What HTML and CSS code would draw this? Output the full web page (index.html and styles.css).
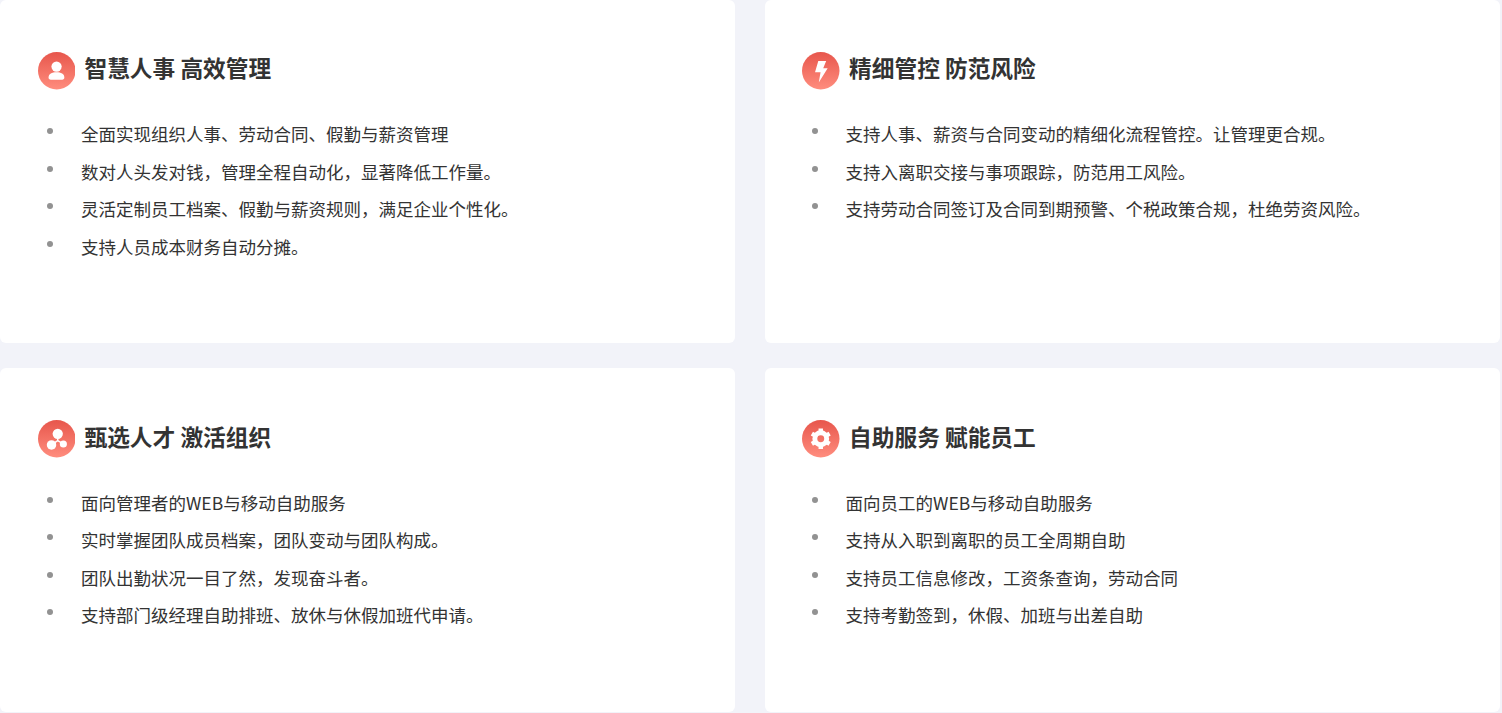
FILE: index.html
```html
<!DOCTYPE html>
<html lang="zh-CN">
<head>
<meta charset="utf-8">
<title>功能特性</title>
<link rel="stylesheet" href="styles.css">
</head>
<body>
<main class="grid">
  <section class="card">
    <h2 class="title">
      <svg class="icon" viewBox="0 0 38 38"><defs><linearGradient id="g1" x1="0" y1="0" x2="0" y2="1"><stop offset="0" stop-color="#e7564c"/><stop offset="1" stop-color="#ff8d7e"/></linearGradient></defs><circle cx="19" cy="19" r="19" fill="url(#g1)"/><circle cx="18.800" cy="14.700" r="5.200" fill="#fff"/><path d="M10.700 25.800c0-3.800 3.400-5.300 8-5.300s8 1.500 8 5.300c0 1.300-.9 2.200-2.200 2.200H12.900c-1.300 0-2.200-.9-2.200-2.200z" fill="#fff"/></svg>
      <span class="title-text">智慧人事 高效管理</span>
    </h2>
    <ul class="list">
      <li>全面实现组织人事、劳动合同、假勤与薪资管理</li>
      <li>数对人头发对钱，管理全程自动化，显著降低工作量。</li>
      <li>灵活定制员工档案、假勤与薪资规则，满足企业个性化。</li>
      <li>支持人员成本财务自动分摊。</li>
    </ul>
  </section>
  <section class="card">
    <h2 class="title">
      <svg class="icon" viewBox="0 0 38 38"><defs><linearGradient id="g2" x1="0" y1="0" x2="0" y2="1"><stop offset="0" stop-color="#e7564c"/><stop offset="1" stop-color="#ff8d7e"/></linearGradient></defs><circle cx="19" cy="19" r="19" fill="url(#g2)"/><path d="M16.500 9h8l-3 7.500h4.500L17 31l1.800-10.500H13.200z" fill="#fff"/></svg>
      <span class="title-text">精细管控 防范风险</span>
    </h2>
    <ul class="list">
      <li>支持人事、薪资与合同变动的精细化流程管控。让管理更合规。</li>
      <li>支持入离职交接与事项跟踪，防范用工风险。</li>
      <li>支持劳动合同签订及合同到期预警、个税政策合规，杜绝劳资风险。</li>
    </ul>
  </section>
  <section class="card">
    <h2 class="title">
      <svg class="icon" viewBox="0 0 38 38"><defs><linearGradient id="g3" x1="0" y1="0" x2="0" y2="1"><stop offset="0" stop-color="#e7564c"/><stop offset="1" stop-color="#ff8d7e"/></linearGradient></defs><circle cx="19" cy="19" r="19" fill="url(#g3)"/><path d="M20 15v6l-6.300 4.300M20 21l5.700 3.300" stroke="#fff" stroke-width="1.500" fill="none"/><circle cx="20" cy="14" r="5.200" fill="#fff"/><circle cx="13.700" cy="25.300" r="4.800" fill="#fff"/><circle cx="25.700" cy="24.300" r="3.600" fill="#fff"/></svg>
      <span class="title-text">甄选人才 激活组织</span>
    </h2>
    <ul class="list">
      <li>面向管理者的WEB与移动自助服务</li>
      <li>实时掌握团队成员档案，团队变动与团队构成。</li>
      <li>团队出勤状况一目了然，发现奋斗者。</li>
      <li>支持部门级经理自助排班、放休与休假加班代申请。</li>
    </ul>
  </section>
  <section class="card">
    <h2 class="title">
      <svg class="icon" viewBox="0 0 38 38"><defs><linearGradient id="g4" x1="0" y1="0" x2="0" y2="1"><stop offset="0" stop-color="#e7564c"/><stop offset="1" stop-color="#ff8d7e"/></linearGradient></defs><circle cx="19" cy="19" r="19" fill="url(#g4)"/><circle cx="19" cy="19" r="6" fill="none" stroke="#fff" stroke-width="5"/><g stroke="#fff" stroke-width="4.500"><path d="M19 8.600v4M19 25.400v4M10 13.800l3.500 2M24.500 22.200l3.500 2M10 24.200l3.500-2M24.500 15.800l3.500-2"/></g></svg>
      <span class="title-text">自助服务 赋能员工</span>
    </h2>
    <ul class="list">
      <li>面向员工的WEB与移动自助服务</li>
      <li>支持从入职到离职的员工全周期自助</li>
      <li>支持员工信息修改，工资条查询，劳动合同</li>
      <li>支持考勤签到，休假、加班与出差自助</li>
    </ul>
  </section>
</main>
</body>
</html>
```

FILE: styles.css
```css
* { box-sizing: border-box; }
html, body { margin: 0; height: 100%; }
body {
  background: #f2f3f9;
  font-family: "Noto Sans CJK SC", "Noto Sans", sans-serif;
  overflow: hidden;
}
.grid {
  display: grid;
  grid-template-columns: 734.800px 735px;
  grid-template-rows: 343.490px 343.510px;
  column-gap: 29.800px;
  row-gap: 25px;
}
.card {
  background: #fff;
  border-radius: 6px;
  padding: 52px 37.500px 0;
}
.title {
  display: flex;
  align-items: center;
  gap: 9.500px;
  margin: 0 0 25.800px;
  height: 37.500px;
  font-size: 22.700px;
  line-height: 30px;
  font-weight: 600;
  color: #333;
}
.title-text { padding-bottom: 5.100px; }
.icon { width: 37.500px; height: 37.500px; flex: none; }
.list {
  list-style: none;
  margin: 0;
  padding: 0 0 0 9.500px;
}
.list li {
  display: flex;
  align-items: flex-start;
  font-size: 17.500px;
  line-height: 37.500px;
  color: #333;
}
.list li::before {
  content: "";
  flex: none;
  width: 6px;
  height: 6px;
  margin: 13px 28px 0 0;
  border-radius: 50%;
  background: #929292;
}
```
